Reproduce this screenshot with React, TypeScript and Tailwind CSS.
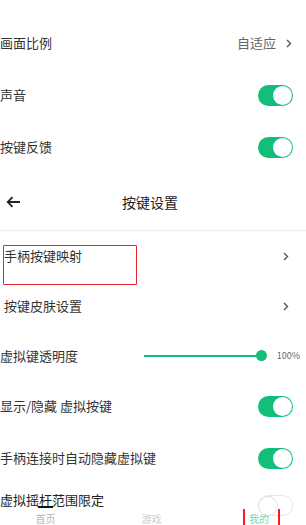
import React from 'react';

const font = { fontFamily: '"Noto Sans CJK SC", "Noto Sans", sans-serif' };

const Toggle = ({ on = true }: { on?: boolean }) =>
  on ? (
    <div className="w-[35px] h-[21px] rounded-full bg-[#12bf7a] flex items-center justify-end pr-[1px]">
      <div className="w-[19px] h-[19px] rounded-full bg-white" />
    </div>
  ) : (
    <div className="w-[35px] h-[21px] rounded-full bg-white border border-[#e2e2e2] flex items-center pl-0">
      <div className="w-[20px] h-[20px] rounded-full bg-white border border-[#d8d8d8] -ml-[1px]" />
    </div>
  );

const Chevron = () => (
  <svg width="6" height="9" viewBox="0 0 6 9" fill="none">
    <path d="M1 1l3.5 3.5L1 8" stroke="#555" strokeWidth="1.4" />
  </svg>
);

export default function App() {
  return (
    <div className="w-[306px] h-[525px] overflow-hidden bg-white text-[13px] text-[#333]" style={font}>
      <div className="pt-[17px]">
        <div className="h-[52px] flex items-center justify-between pr-[14px]">
          <span>画面比例</span>
          <div className="flex items-center gap-[10px]">
            <span className="text-[#666]">自适应</span>
            <Chevron />
          </div>
        </div>
        <div className="h-[52px] flex items-center justify-between pr-[13px]">
          <span>声音</span>
          <Toggle />
        </div>
        <div className="h-[52px] flex items-center justify-between pr-[13px]">
          <span>按键反馈</span>
          <Toggle />
        </div>
      </div>

      <div className="h-[57px] mt-[1px] flex items-center relative border-b border-[#eeeeee]">
        <svg className="ml-[6px]" width="15" height="12" viewBox="0 0 15 12" fill="none">
          <path d="M14 6H2M6.5 1.2L1.7 6l4.8 4.8" stroke="#222" strokeWidth="1.8" />
        </svg>
        <span className="flex-1 text-center text-[14px] text-[#222] pr-[27px]">按键设置</span>
      </div>

      <div className="relative h-[50px] flex items-center justify-between pl-[4px] pr-[17px]">
        <span>手柄按键映射</span>
        <Chevron />
        <div className="absolute left-[3px] top-[14px] w-[134px] h-[40px] border-[1.5px] border-[#e8262b] rounded-[1px]" />
      </div>
      <div className="h-[50px] flex items-center justify-between pl-[4px] pr-[17px]">
        <span>按键皮肤设置</span>
        <Chevron />
      </div>
      <div className="h-[49px] flex items-center pr-[6px]">
        <span className="flex-1">虚拟键透明度</span>
        <div className="w-[123px] flex items-center">
          <div className="flex-1 h-[2px] bg-[#12bf7a]" />
          <div className="w-[11px] h-[11px] rounded-full bg-[#12bf7a] -ml-[1px]" />
        </div>
        <span className="ml-[10px] text-[9px] text-[#666]">100%</span>
      </div>
      <div className="h-[52px] flex items-center justify-between pr-[13px]">
        <span>显示/隐藏 虚拟按键</span>
        <Toggle />
      </div>
      <div className="h-[52px] flex items-center justify-between pr-[13px]">
        <span>手柄连接时自动隐藏虚拟键</span>
        <Toggle />
      </div>

      <div className="relative h-[45px]">
        <div className="flex items-start justify-between pr-[13px] pt-[6px]">
          <span className="text-[#222]">虚拟摇杆范围限定</span>
          <div className="mt-[5px] opacity-80">
            <Toggle on={false} />
          </div>
        </div>
        <div className="absolute left-0 right-0 top-[19px] h-[26px] flex text-[10px] text-[#999]">
          <div className="w-[91px] flex flex-col items-center">
            <div className="w-[15px] h-[2px] bg-[#111] mt-[3px]" />
            <span className="mt-[3px] opacity-70">首页</span>
          </div>
          <div className="w-[121px] flex flex-col items-center pt-[8px]">
            <span className="opacity-50">游戏</span>
          </div>
          <div className="relative w-[94px] flex flex-col items-center pt-[8px]">
            <span className="text-[#12bf7a] opacity-60">我的</span>
            <div className="absolute left-[31px] top-[6px] w-[37px] h-[30px] border-x-[2px] border-t-0 border-[#ff1a1a]" />
          </div>
        </div>
      </div>
    </div>
  );
}
